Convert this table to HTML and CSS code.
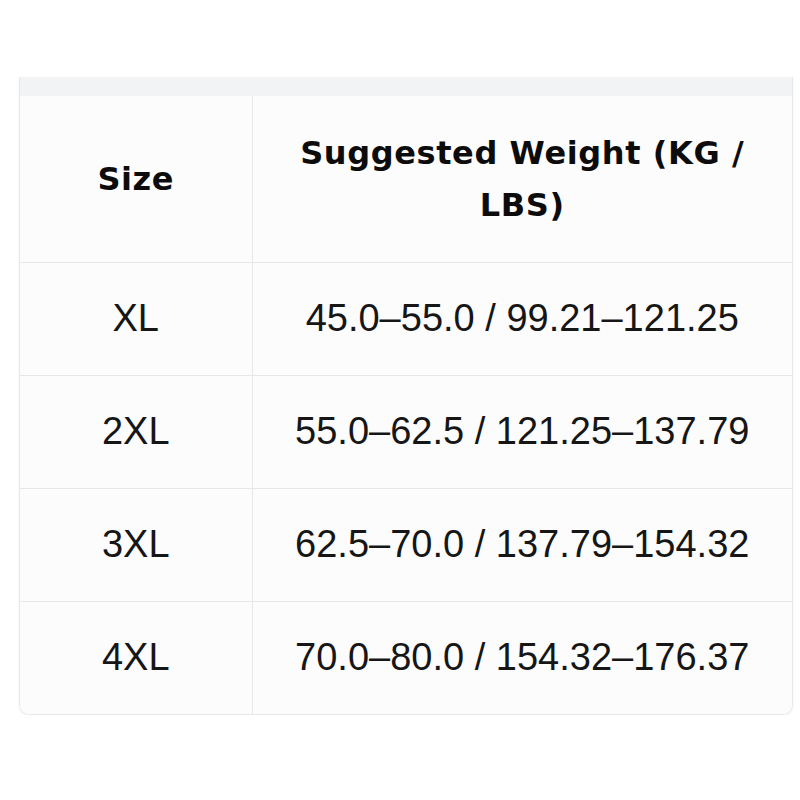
FILE: index.html
```html
<!DOCTYPE html>
<html lang="en">
<head>
    <meta charset="UTF-8">
    <meta name="viewport" content="width=device-width, initial-scale=1.0">
    <title>Size Chart</title>
    <link rel="stylesheet" href="styles.css">
</head>
<body>
    <div class="chart">
        <div class="chart-top"></div>
        <table class="size-table">
            <thead>
                <tr>
                    <th class="col-size">Size</th>
                    <th class="col-weight">Suggested Weight (KG / LBS)</th>
                </tr>
            </thead>
            <tbody>
                <tr>
                    <td>XL</td>
                    <td>45.0–55.0 / 99.21–121.25</td>
                </tr>
                <tr>
                    <td>2XL</td>
                    <td>55.0–62.5 / 121.25–137.79</td>
                </tr>
                <tr>
                    <td>3XL</td>
                    <td>62.5–70.0 / 137.79–154.32</td>
                </tr>
                <tr>
                    <td>4XL</td>
                    <td>70.0–80.0 / 154.32–176.37</td>
                </tr>
            </tbody>
        </table>
    </div>
</body>
</html>
```

FILE: styles.css
```css
body {
    margin: 0;
    background-color: #ffffff;
    font-family: "Liberation Sans", Arial, sans-serif;
    color: #161616;
}

.chart {
    width: 774px;
    margin: 77px 0 0 19px;
    border: 1px solid #e8e9ea;
    border-top: none;
    border-radius: 0 0 10px 10px;
    box-shadow: 0 1px 3px rgba(0, 0, 0, 0.06);
    overflow: hidden;
    box-sizing: border-box;
}

/* grey strip above the header row */
.chart-top {
    height: 19px;
    background-color: #f2f3f4;
}

.size-table {
    width: 100%;
    border-collapse: collapse;
    background-color: #fcfcfc;
    table-layout: fixed;
}

.size-table th,
.size-table td {
    box-sizing: border-box;
    border: 1px solid #e6e7e8;
    text-align: center;
    vertical-align: middle;
}

.size-table th {
    height: 166px;
    padding: 0 30px;
    font-family: "DejaVu Sans", Verdana, sans-serif;
    font-size: 32px;
    font-weight: bold;
    letter-spacing: 0.6px;
    line-height: 52px;
    color: #0c0c0c;
}

.col-size {
    width: 232px;
}

.size-table td {
    height: 113px;
    padding: 0;
    font-size: 38px;
}

.size-table tr:first-child th {
    border-top: none;
}

.size-table tr:last-child td {
    border-bottom: none;
}

.size-table th:first-child,
.size-table td:first-child {
    border-left: none;
}

.size-table th:last-child,
.size-table td:last-child {
    border-right: none;
}
```
